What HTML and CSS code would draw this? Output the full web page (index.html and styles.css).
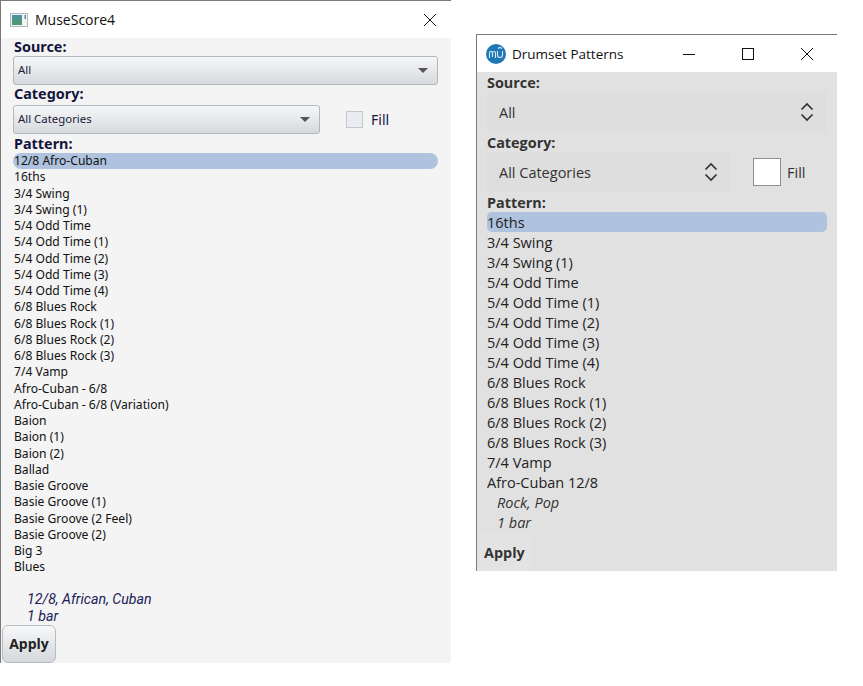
FILE: index.html
```html
<!DOCTYPE html>
<html lang="en">
<head>
    <meta charset="UTF-8">
    <meta name="viewport" content="width=device-width, initial-scale=1.0">
    <title>Drumset Patterns</title>
    <link rel="stylesheet" href="styles.css">
</head>
<body>
    <!-- old dialog -->
    <div class="window old">
        <div class="titlebar">
            <svg class="appicon" width="18" height="16" viewBox="0 0 18 16">
                <defs>
                    <linearGradient id="screen" x1="0" y1="0" x2="0" y2="1">
                        <stop offset="0" stop-color="#4f8fa0"/>
                        <stop offset="1" stop-color="#4f9a6a"/>
                    </linearGradient>
                </defs>
                <rect x="0.5" y="1.5" width="17" height="13" fill="#f2f4f6" stroke="#b4b8bd"/>
                <rect x="2" y="3" width="10" height="10" fill="url(#screen)"/>
                <rect x="14.5" y="3" width="1.5" height="4" fill="#5d8a96"/>
            </svg>
            <span class="title">MuseScore4</span>
            <svg class="winbtn close" width="14" height="14" viewBox="0 0 14 14">
                <path d="M1 1 L13 13 M13 1 L1 13" stroke="#111" stroke-width="1" fill="none"/>
            </svg>
        </div>
        <div class="content">
            <div class="label">Source:</div>
            <div class="combo">
                <span>All</span>
                <span class="arrow"></span>
            </div>
            <div class="label category">Category:</div>
            <div class="row">
                <div class="combo">
                    <span>All Categories</span>
                    <span class="arrow"></span>
                </div>
                <span class="check"></span>
                <span class="fill">Fill</span>
            </div>
            <div class="label pattern">Pattern:</div>
            <ul class="list">
                <li class="selected">12/8 Afro-Cuban</li>
                <li>16ths</li>
                <li>3/4 Swing</li>
                <li>3/4 Swing (1)</li>
                <li>5/4 Odd Time</li>
                <li>5/4 Odd Time (1)</li>
                <li>5/4 Odd Time (2)</li>
                <li>5/4 Odd Time (3)</li>
                <li>5/4 Odd Time (4)</li>
                <li>6/8 Blues Rock</li>
                <li>6/8 Blues Rock (1)</li>
                <li>6/8 Blues Rock (2)</li>
                <li>6/8 Blues Rock (3)</li>
                <li>7/4 Vamp</li>
                <li>Afro-Cuban - 6/8</li>
                <li>Afro-Cuban - 6/8 (Variation)</li>
                <li>Baion</li>
                <li>Baion (1)</li>
                <li>Baion (2)</li>
                <li>Ballad</li>
                <li>Basie Groove</li>
                <li>Basie Groove (1)</li>
                <li>Basie Groove (2 Feel)</li>
                <li>Basie Groove (2)</li>
                <li>Big 3</li>
                <li>Blues</li>
            </ul>
            <div class="details">
                <div>12/8, African, Cuban</div>
                <div>1 bar</div>
            </div>
        </div>
        <button class="apply" type="button">Apply</button>
    </div>

    <!-- new dialog -->
    <div class="window new">
        <div class="titlebar">
            <svg class="appicon" width="20" height="20" viewBox="0 0 20 20">
                <circle cx="10" cy="10" r="10" fill="#1f78b4"/>
                <path d="M3.5 14 V9 Q3.5 7.5 5 7.5 Q6.5 7.5 6.5 9 V13 M6.5 9 Q6.5 7.5 8 7.5 Q9.5 7.5 9.5 9 V14 M11.5 7 V11 Q11.5 13.5 14 13.5 Q16.5 13.5 16.5 11 V7" stroke="#d5ecf7" stroke-width="1.1" fill="none"/>
                <path d="M12 4.5 Q14 2.8 16 4.5" stroke="#d5ecf7" stroke-width="1.1" fill="none"/>
            </svg>
            <span class="title">Drumset Patterns</span>
            <svg class="winbtn min" width="14" height="14" viewBox="0 0 14 14">
                <path d="M1 7.5 H13" stroke="#111" stroke-width="1" fill="none"/>
            </svg>
            <svg class="winbtn max" width="14" height="14" viewBox="0 0 14 14">
                <rect x="1.5" y="1.5" width="11" height="11" stroke="#111" stroke-width="1" fill="none"/>
            </svg>
            <svg class="winbtn close" width="14" height="14" viewBox="0 0 14 14">
                <path d="M1 1 L13 13 M13 1 L1 13" stroke="#111" stroke-width="1" fill="none"/>
            </svg>
        </div>
        <div class="content">
            <div class="label">Source:</div>
            <div class="combo">
                <span>All</span>
                <svg class="updown" width="14" height="20" viewBox="0 0 14 20">
                    <path d="M1.5 7.5 L7 2 L12.5 7.5 M1.5 12.5 L7 18 L12.5 12.5" stroke="#333" stroke-width="1.7" fill="none"/>
                </svg>
            </div>
            <div class="label category">Category:</div>
            <div class="row">
                <div class="combo">
                    <span>All Categories</span>
                    <svg class="updown" width="14" height="20" viewBox="0 0 14 20">
                        <path d="M1.5 7.5 L7 2 L12.5 7.5 M1.5 12.5 L7 18 L12.5 12.5" stroke="#333" stroke-width="1.7" fill="none"/>
                    </svg>
                </div>
                <span class="check"></span>
                <span class="fill">Fill</span>
            </div>
            <div class="label pattern">Pattern:</div>
            <ul class="list">
                <li class="selected">16ths</li>
                <li>3/4 Swing</li>
                <li>3/4 Swing (1)</li>
                <li>5/4 Odd Time</li>
                <li>5/4 Odd Time (1)</li>
                <li>5/4 Odd Time (2)</li>
                <li>5/4 Odd Time (3)</li>
                <li>5/4 Odd Time (4)</li>
                <li>6/8 Blues Rock</li>
                <li>6/8 Blues Rock (1)</li>
                <li>6/8 Blues Rock (2)</li>
                <li>6/8 Blues Rock (3)</li>
                <li>7/4 Vamp</li>
                <li>Afro-Cuban 12/8</li>
            </ul>
            <div class="details">
                <div>Rock, Pop</div>
                <div>1 bar</div>
            </div>
        </div>
        <button class="apply" type="button">Apply</button>
    </div>
</body>
</html>
```

FILE: styles.css
```css
body {
    margin: 0;
    background-color: #fff;
    font-family: "Open Sans", "Noto Sans", sans-serif;
}

/* the two dialogs sit on a free canvas */
.window {
    position: absolute;
    box-sizing: border-box;
    border-top: 1px solid #7a7a7a;
    border-left: 1px solid #7a7a7a;
    display: flex;
    flex-direction: column;
}

.titlebar {
    display: flex;
    align-items: center;
    flex: none;
    height: 37px;
    background-color: #fff;
    color: #111;
}

.list {
    list-style: none;
    margin: 0;
    padding: 0;
}

.row {
    display: flex;
    align-items: center;
}

.combo {
    display: flex;
    align-items: center;
    justify-content: space-between;
    box-sizing: border-box;
}

.check {
    display: block;
    box-sizing: border-box;
    flex: none;
}

.apply {
    font-family: inherit;
    font-weight: bold;
    padding: 0;
}

/* old dialog */
.old {
    left: 0;
    top: 0;
    width: 451px;
    height: 663px;
    background-color: #f4f4f4;
}

.old .titlebar {
    padding-left: 9px;
    font-size: 14px;
}

.old .title {
    margin-left: 7px;
}

.old .winbtn {
    margin-left: auto;
    margin-right: 14px;
}

.old .content {
    padding: 0 12px;
    font-family: "Noto Sans", sans-serif;
    font-size: 12.1px;
    color: #14143c;
}

.old .label {
    height: 18px;
    line-height: 18px;
    padding-left: 1px;
    font-size: 14.4px;
    font-weight: bold;
}

.old .combo {
    width: 425px;
    height: 29px;
    padding: 0 9px 0 4px;
    border: 1px solid #b4b7ba;
    border-radius: 3px;
    background: linear-gradient(#f6f7f8, #d6d9dd);
    font-size: 11.4px;
    line-height: 14px;
    padding-bottom: 2px;
    color: #20203a;
}

.old .arrow {
    width: 0;
    height: 0;
    margin-top: 2px;
    border-left: 5px solid transparent;
    border-right: 5px solid transparent;
    border-top: 5px solid #555;
}

.old .category {
    margin-top: 1px;
    height: 19px;
    line-height: 16px;
}

.old .row .combo {
    width: 307px;
}

.old .check {
    width: 17px;
    height: 17px;
    margin-left: 26px;
    border: 1px solid #c4c7ca;
    background-color: #e9ecf0;
}

.old .fill {
    margin-left: 8px;
    font-size: 14px;
}

.old .pattern {
    margin-top: 1px;
    line-height: 17px;
}

.old .list li {
    height: 16.25px;
    line-height: 16.5px;
    padding-left: 1px;
    color: #111;
    white-space: nowrap;
}

.old .list .selected {
    width: 424px;
    border-radius: 8px;
    background-color: #afc3de;
}

.old .details {
    margin-top: 15px;
    padding-left: 14px;
    font-family: Roboto, sans-serif;
    font-size: 14.2px;
    font-style: italic;
    line-height: 17px;
    color: #20205a;
}

.old .apply {
    width: 54px;
    height: 40px;
    margin: auto 0 0 1px;
    border: 1px solid #b9bcbf;
    border-radius: 6px;
    background: linear-gradient(#f7f8f9, #d4d8dc);
    font-size: 14px;
    color: #222;
}

/* new dialog */
.new {
    left: 476px;
    top: 34px;
    width: 361px;
    height: 537px;
    background-color: #e1e1e1;
}

.new .titlebar {
    padding-left: 9px;
    font-size: 13.5px;
}

.new .title {
    margin-left: 6px;
}

.new .min {
    margin-left: auto;
}

.new .max {
    margin-left: 45px;
}

.new .close {
    margin-left: 45px;
    margin-right: 23px;
}

.new .content {
    padding: 0 10px;
    font-size: 14.5px;
    color: #333;
}

.new .label {
    height: 20px;
    line-height: 22px;
    font-size: 14.4px;
    font-weight: bold;
}

.new .combo {
    width: 340px;
    height: 40px;
    padding: 0 13px 0 12px;
    background-color: #dedede;
}

.new .row .combo {
    width: 244px;
}

.new .check {
    width: 28px;
    height: 28px;
    margin-left: 22px;
    border: 1px solid #8f8f8f;
    background-color: #fff;
}

.new .fill {
    margin-left: 6px;
}

.new .list li {
    height: 20px;
    line-height: 22px;
    color: #222;
    white-space: nowrap;
}

.new .list .selected {
    width: 340px;
    border-radius: 5px;
    background-color: #afc3de;
}

.new .details {
    padding-left: 10px;
    font-style: italic;
    line-height: 20px;
    padding-top: 1px;
}

.new .apply {
    width: 53px;
    height: 38px;
    margin-top: auto;
    padding-left: 7px;
    border: none;
    background-color: #e3e3e3;
    font-size: 14.4px;
    color: #333;
    text-align: left;
}
```
